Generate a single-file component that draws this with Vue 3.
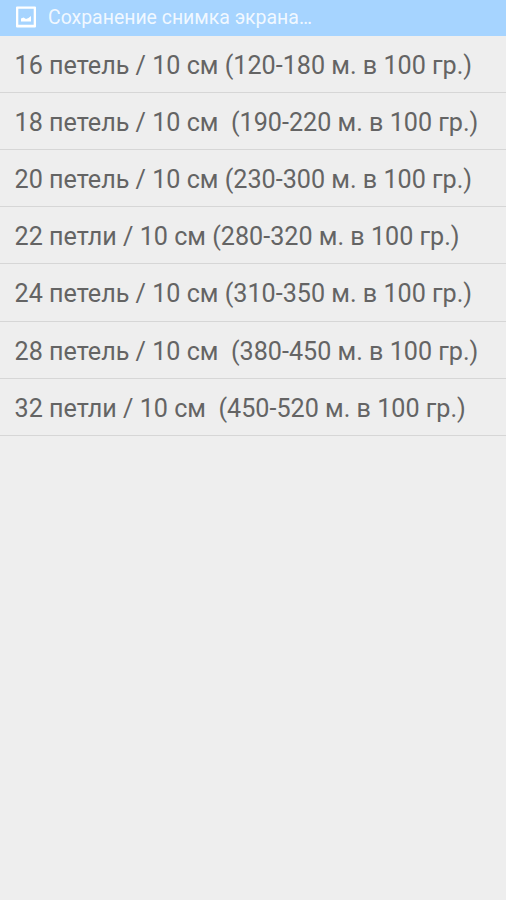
<script setup>
const items = [
  '16 петель / 10 см (120-180 м. в 100 гр.)',
  '18 петель / 10 см  (190-220 м. в 100 гр.)',
  '20 петель / 10 см (230-300 м. в 100 гр.)',
  '22 петли / 10 см (280-320 м. в 100 гр.)',
  '24 петель / 10 см (310-350 м. в 100 гр.)',
  '28 петель / 10 см  (380-450 м. в 100 гр.)',
  '32 петли / 10 см  (450-520 м. в 100 гр.)',
]
</script>

<template>
  <main class="screen">
    <header class="status-bar">
      <svg class="status-icon" viewBox="0 0 20 22" aria-hidden="true">
        <path
          fill="#fff"
          fill-rule="evenodd"
          d="M1 0.500h18a1 1 0 0 1 1 1v19a1 1 0 0 1-1 1H1a1 1 0 0 1-1-1v-19a1 1 0 0 1 1-1zM2.300 2.800v16h15.400v-16z"
        />
        <path fill="#fff" d="M5 15.500v-3l2.500-1 2.500 1.500 2.500-1 2.500-2v5.500z" />
      </svg>
      <span>Сохранение снимка экрана…</span>
    </header>

    <ul class="list">
      <li v-for="item in items" :key="item" class="list-item">{{ item }}</li>
    </ul>
  </main>
</template>

<style>
body {
  background: #eee;
}
</style>

<style scoped>
.screen {
  min-height: 100vh;
  overflow: hidden;
  background: #eee;
  font-family: Roboto, 'Noto Sans', sans-serif;
}

.status-bar {
  display: flex;
  align-items: center;
  gap: 12px;
  box-sizing: border-box;
  height: 36px;
  padding: 0 16px 2px;
  background: #a6d4ff;
  color: rgba(255, 255, 255, 0.85);
  font-size: 19.45px;
  white-space: nowrap;
}

.status-icon {
  width: 20px;
  height: 22px;
}

.list {
  margin: 0;
  padding: 0;
  list-style: none;
}

.list-item {
  box-sizing: border-box;
  height: 57.12px;
  padding: 1px 0 0 14.5px;
  border-bottom: 1px solid #d6d6d6;
  color: #646464;
  font-size: 25.15px;
  line-height: 57px;
  white-space: pre;
}
</style>
